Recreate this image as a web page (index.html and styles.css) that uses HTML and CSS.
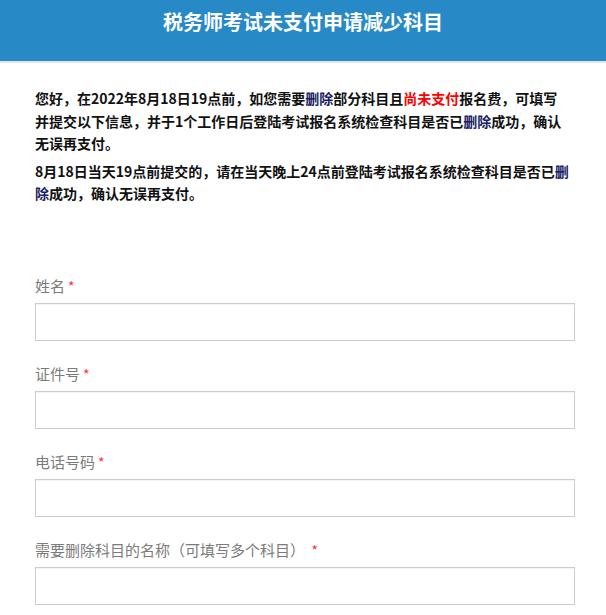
FILE: index.html
```html
<!DOCTYPE html>
<html lang="zh-CN">
<head>
    <meta charset="UTF-8">
    <meta name="viewport" content="width=device-width, initial-scale=1.0">
    <title>税务师考试未支付申请减少科目</title>
    <link rel="stylesheet" href="styles.css">
</head>
<body>
    <div class="header">
        <h1>税务师考试未支付申请减少科目</h1>
    </div>

    <div class="content">
        <div class="notice">
            <p class="intro">您好，在2022年8月18日19点前，如您需要<span class="del">删除</span>部分科目且<span class="warn">尚未支付</span>报名费，可填写并提交以下信息，并于1个工作日后登陆考试报名系统检查科目是否已<span class="del">删除</span>成功，确认无误再支付。</p>
            <p>8月18日当天19点前提交的，请在当天晚上24点前登陆考试报名系统检查科目是否已<span class="del">删除</span>成功，确认无误再支付。</p>
        </div>

        <form class="form">
            <div class="field">
                <label>姓名<span class="req">*</span></label>
                <input type="text">
            </div>
            <div class="field">
                <label>证件号<span class="req">*</span></label>
                <input type="text">
            </div>
            <div class="field">
                <label>电话号码<span class="req">*</span></label>
                <input type="text">
            </div>
            <div class="field">
                <label>需要删除科目的名称（可填写多个科目） <span class="req">*</span></label>
                <input type="text">
            </div>
        </form>
    </div>
</body>
</html>
```

FILE: styles.css
```css
:root {
    --blue: #2789c6;
    --text: #111111;
    --label: #7b7b7b;
    --border: #cccccc;
}

* {
    margin: 0;
    padding: 0;
    box-sizing: border-box;
    font-family: 'Noto Sans CJK SC', 'Noto Sans', sans-serif;
}

body {
    background: #ffffff;
    color: var(--text);
}

.header {
    background: var(--blue);
    height: 63px;
    border-bottom: 2px solid #e4e4e4;
    text-align: center;
}

.header h1 {
    color: #ffffff;
    font-size: 20px;
    font-weight: bold;
    line-height: 44px;
}

.content {
    width: 540px;
    margin-left: 35px;
    padding-top: 24px;
}

.notice p {
    font-size: 14px;
    font-weight: bold;
    line-height: 22.5px;
    margin-bottom: 5px;
}

.notice p.intro {
    width: 532px;
}

.notice .warn {
    color: #ff0000;
}

.notice .del {
    color: #172063;
}

.form {
    margin-top: 71px;
}

.field {
    margin-bottom: 23px;
}

.field label {
    display: block;
    font-size: 15px;
    line-height: 20px;
    color: var(--label);
    margin-bottom: 7px;
}

.field .req {
    color: #ff3333;
    font-size: 14px;
    margin-left: 3px;
    vertical-align: top;
}

.field input {
    display: block;
    width: 100%;
    height: 38px;
    border: 1px solid var(--border);
    box-shadow: inset 0 1px 1px rgba(0, 0, 0, 0.05);
    background: #ffffff;
    outline: none;
}
```
